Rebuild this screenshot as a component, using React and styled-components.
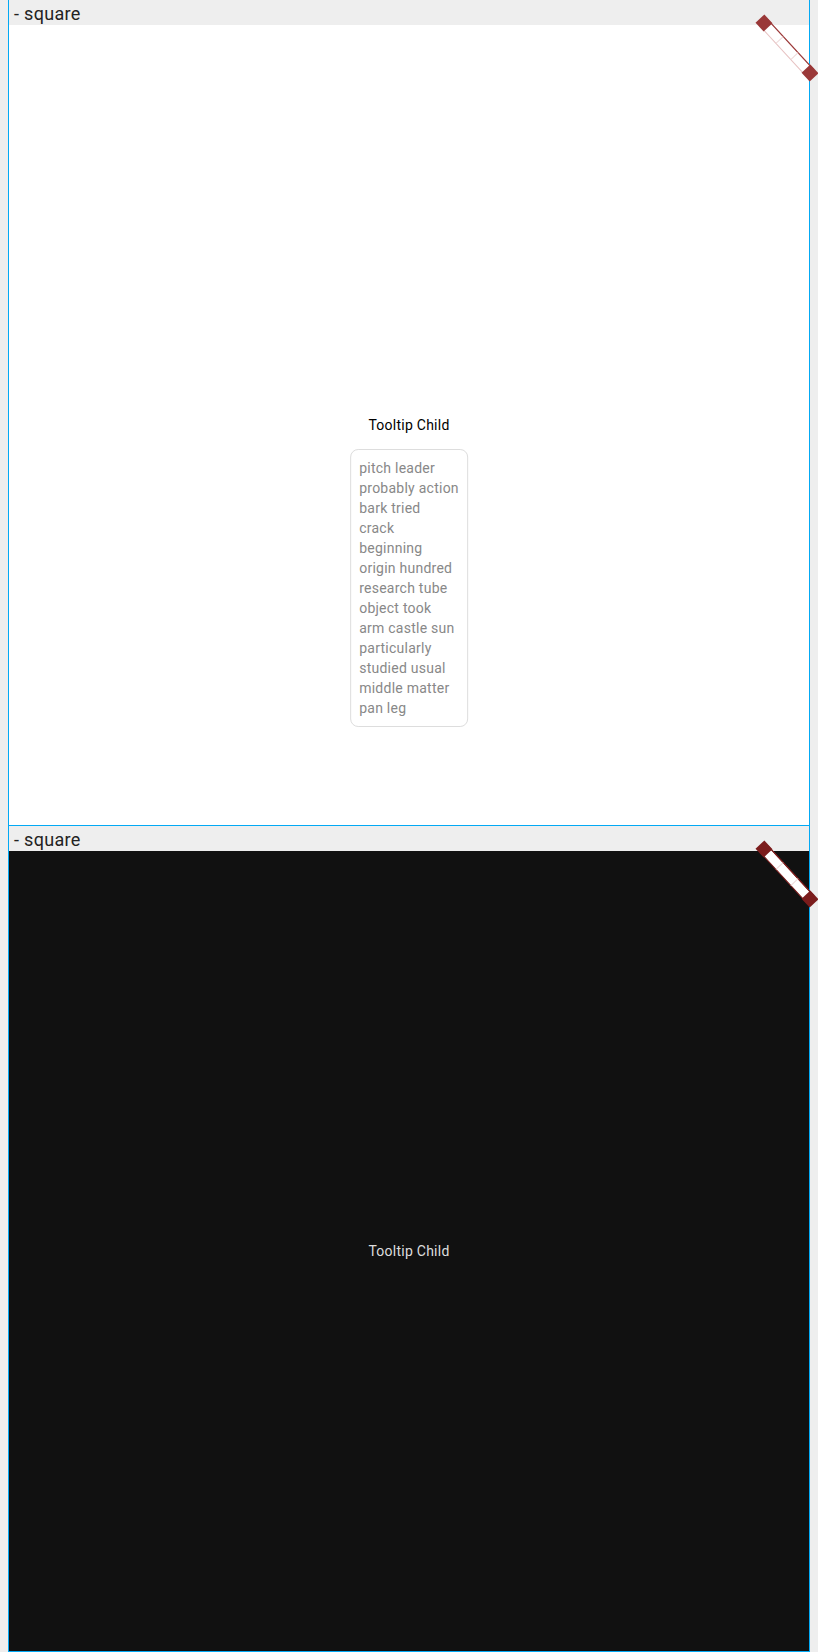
import React from "react";
import styled, { createGlobalStyle, } from "styled-components";

// --------------------------------------------------

const GlobalStyle = createGlobalStyle`
	html, body {
		margin: 0;
		padding: 0;
		background: #eeeeee;
	}
	body {
		padding: 0 8px;
		font-family: Roboto, "Liberation Sans", sans-serif;
	}
`;

const themes = {
	light: { bg: "#ffffff", text: "#000000", handle: "#9a3838", bar: "#ffffff", edge: "#e7c3c3", },
	dark: { bg: "#111111", text: "#dddddd", handle: "#7b1c1c", bar: "#ffffff", edge: "#7b1c1c", },
};

const words = [
	"pitch leader",
	"probably action",
	"bark tried",
	"crack",
	"beginning",
	"origin hundred",
	"research tube",
	"object took",
	"arm castle sun",
	"particularly",
	"studied usual",
	"middle matter",
	"pan leg",
];

const Frame = styled.section`
	position: relative;
	display: flex;
	flex-direction: column;
	border: 1px solid #03a9f4;
	margin-top: -1px;
`;

const Header = styled.div`
	height: 25px;
	overflow: hidden;
	padding-left: 5px;
	background: #eeeeee;
	color: #222222;
	font-size: 18px;
	line-height: 27px;
	letter-spacing: 0.3px;
`;

const Square = styled.div`
	height: 800px;
	display: flex;
	align-items: center;
	justify-content: center;
	background: ${ p => p.bg };
`;

const Anchor = styled.span`
	position: relative;
	display: inline-block;
	font-size: 14px;
	line-height: 20px;
	letter-spacing: 0.25px;
	color: ${ p => p.color };
`;

const Tip = styled.div`
	position: absolute;
	top: calc(100% + 14px);
	left: 50%;
	transform: translateX(-50%);
	padding: 8px;
	border: 1px solid #dddddd;
	border-radius: 8px;
	background: #ffffff;
	color: #888888;
	font-size: 14px;
	line-height: 20px;
	letter-spacing: 0.25px;
	white-space: nowrap;
`;

const HandleSvg = styled.svg`
	position: absolute;
	top: 6px;
	right: -9px;
	overflow: visible;
`;

const Handle = ({ t, }) => (
	<HandleSvg width = "70" height = "84" viewBox = "0 0 70 84">
		<g transform = "translate(16 17) rotate(47.4)">
			<rect x = "0" y = "-5" width = "68" height = "10" fill = { t.bar } stroke = { t.edge } strokeWidth = "1" />
			<line x1 = "0" y1 = "-5" x2 = "68" y2 = "-5" stroke = { t.handle } strokeWidth = "1.2" />
			<line x1 = "23" y1 = "-5" x2 = "23" y2 = "5" stroke = "#eedada" strokeWidth = "1" />
			<line x1 = "45" y1 = "-5" x2 = "45" y2 = "5" stroke = "#eedada" strokeWidth = "1" />
			<rect x = "-6" y = "-6" width = "12" height = "12" fill = { t.handle } />
			<rect x = "62" y = "-6" width = "12" height = "12" fill = { t.handle } />
		</g>
	</HandleSvg>
);

const Story = ({ mode, withTip, }) => {
	const t = themes[mode];
	return (
		<Frame>
			<Header>- square</Header>
			<Square bg = { t.bg }>
				<Anchor color = { t.text }>
					Tooltip Child
					{withTip ? (
						<Tip>
							{words.map(w => <div key = { w }>{w}</div>)}
						</Tip>
					) : null}
				</Anchor>
			</Square>
			<Handle t = { t } />
		</Frame>
	);
};

export default function App() {
	return (
		<>
			<GlobalStyle />
			<Story mode = "light" withTip />
			<Story mode = "dark" />
		</>
	);
}
